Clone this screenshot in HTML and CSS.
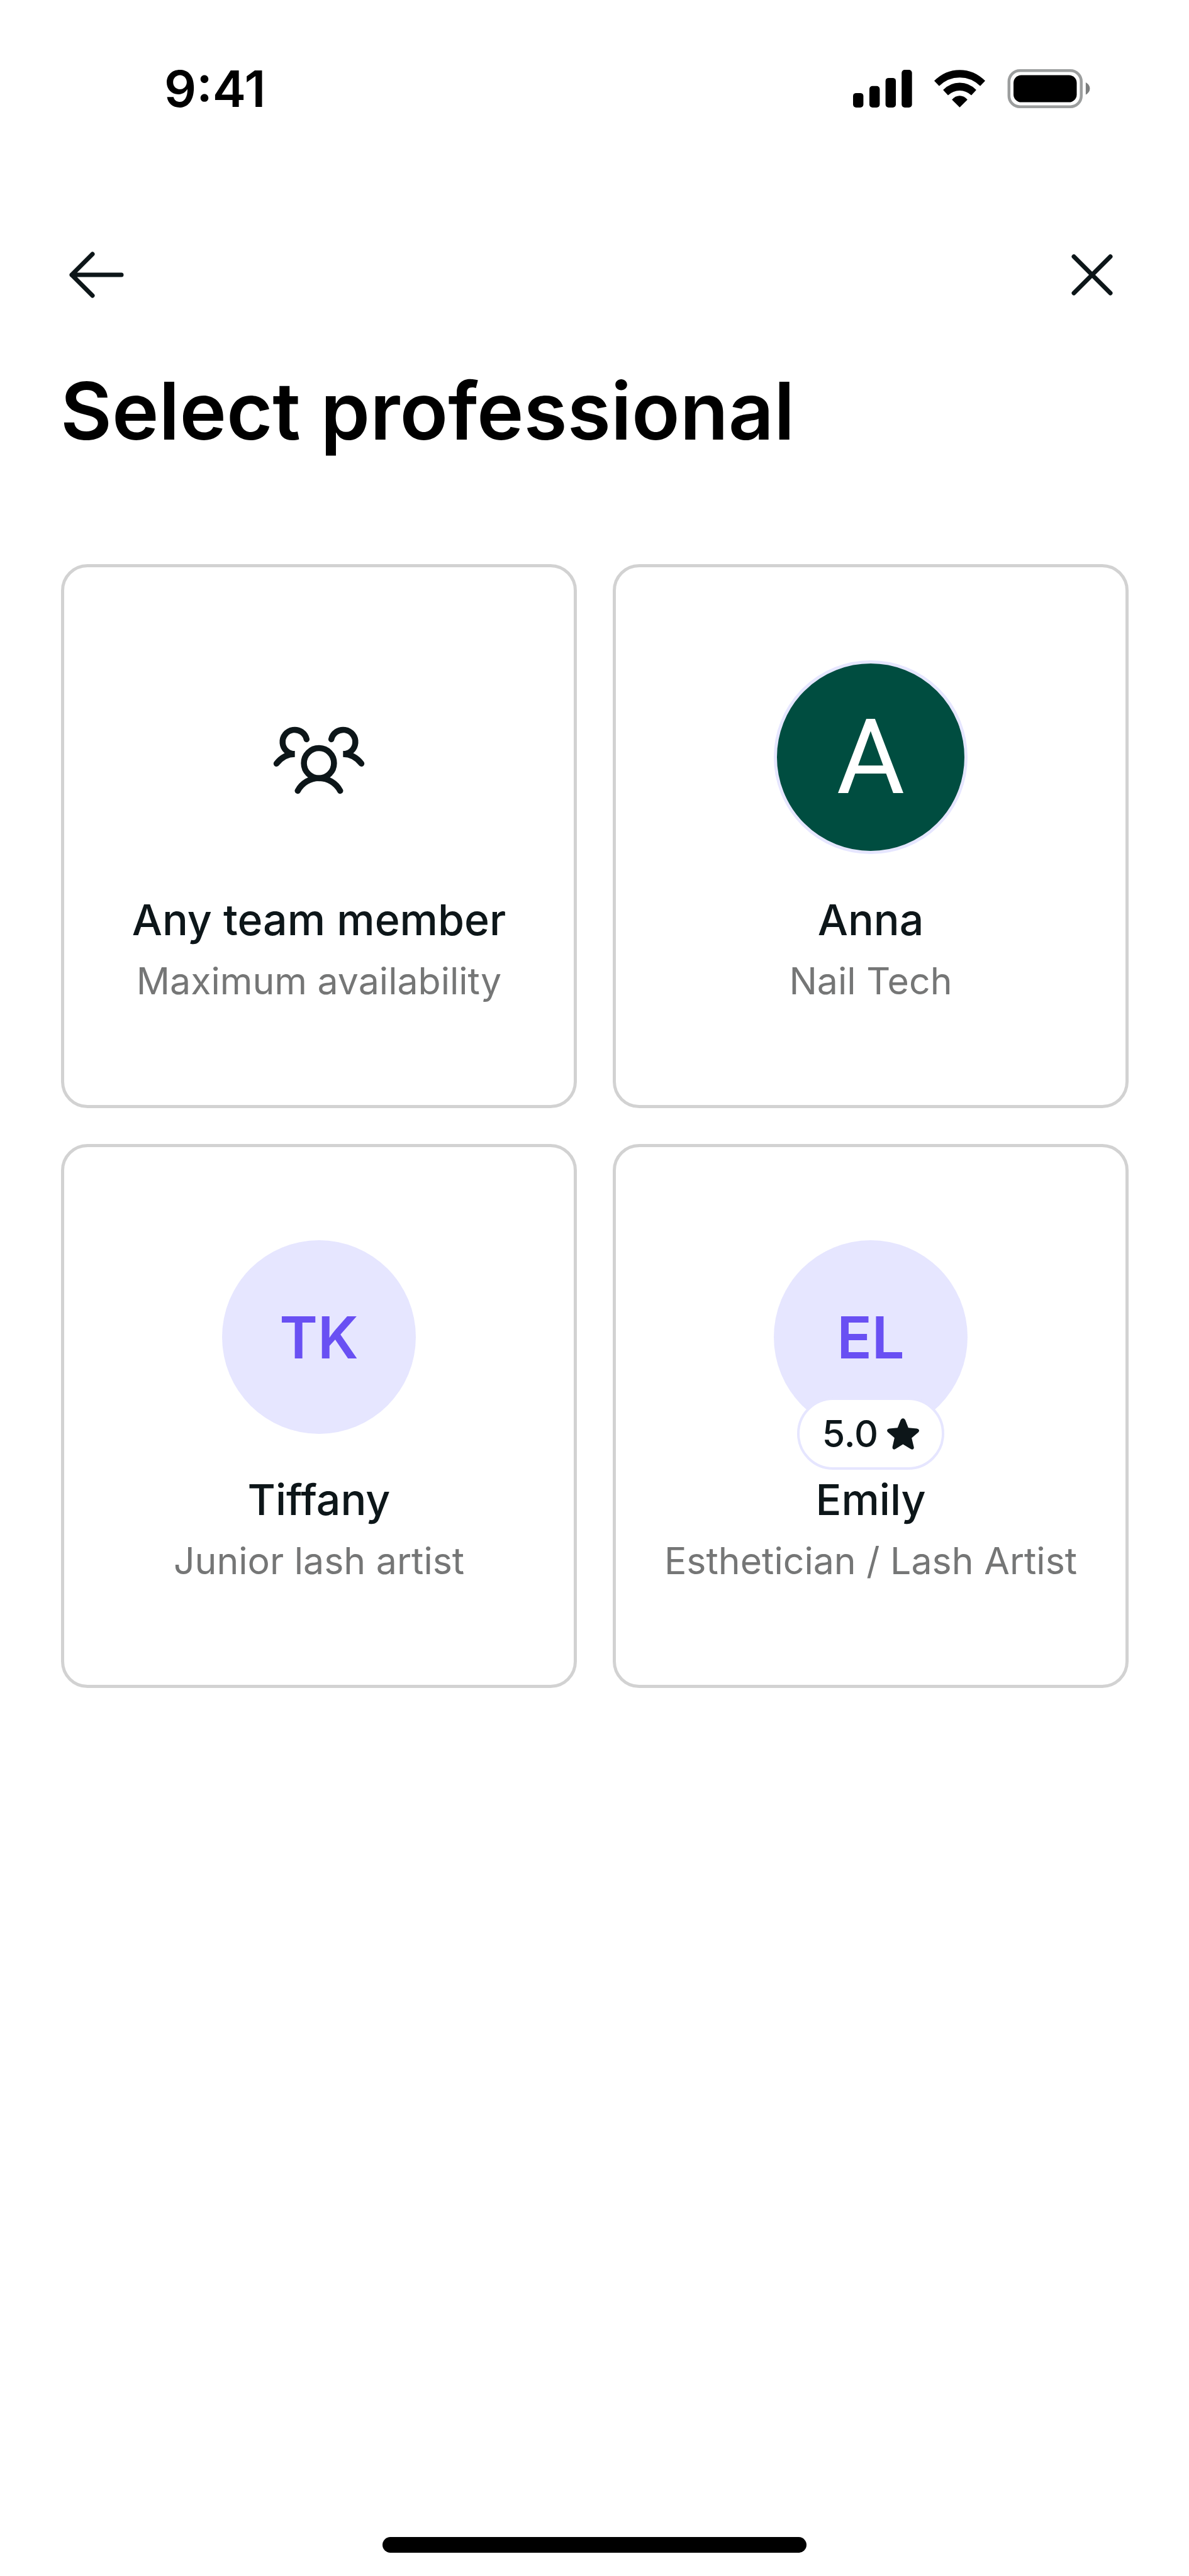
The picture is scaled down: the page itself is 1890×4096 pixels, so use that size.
FILE: index.html
```html
<!DOCTYPE html>
<html lang="en">
<head>
<meta charset="utf-8">
<meta name="viewport" content="width=device-width, initial-scale=1">
<title>Select professional</title>
<link rel="stylesheet" href="styles.css">
</head>
<body>
<div class="screen">
  <div class="status-bar">
    <time class="clock">9:41</time>
    <div class="status-icons">
      <svg class="signal" viewBox="82 66 286 182" aria-hidden="true">
        <rect x="82" y="178" width="50" height="70" rx="15"/>
        <rect x="161" y="144" width="50" height="104" rx="15"/>
        <rect x="239" y="105" width="50" height="143" rx="15"/>
        <rect x="317" y="66" width="50" height="182" rx="15"/>
      </svg>
      <svg class="wifi" viewBox="475 66 247 182" aria-hidden="true">
        <path d="M475 119Q528 66 598.500 66T722 119L698 144Q655 103 598.500 103T499 144Z"/>
        <path d="M518 163Q552 128 598.500 128T679 163L655 189Q630 166 598.500 166T542 189Z"/>
        <path d="M561 210Q577 191 598.500 191T636 210L598.500 248Z"/>
      </svg>
      <svg class="battery" viewBox="831 62 401 190" aria-hidden="true">
        <rect class="battery-shell" x="838" y="69" width="352" height="176" rx="53"/>
        <rect x="860" y="91" width="308" height="132" rx="38"/>
        <path class="battery-cap" d="M1212 126Q1232 137 1232 156T1212 186Z"/>
      </svg>
    </div>
  </div>

  <header class="header">
    <nav class="nav">
      <button class="icon-button" type="button" aria-label="Back">
        <svg viewBox="0 0 87 74" width="87" height="74" aria-hidden="true"><path d="M83 37H4M37 4L4 37L37 70"/></svg>
      </button>
      <button class="icon-button" type="button" aria-label="Close">
        <svg viewBox="0 0 66 66" width="66" height="66" aria-hidden="true"><path d="M4 4L62 62M62 4L4 62"/></svg>
      </button>
    </nav>
    <h1 class="title">Select professional</h1>
  </header>

  <main class="team">
    <button class="card" type="button">
      <span class="avatar avatar-any">
        <svg viewBox="112 16 464 464" width="152" height="152" aria-hidden="true">
          <circle cx="344" cy="277" r="73"/>
          <path d="M241 411A117 117 0 0 1 447 411"/>
          <path d="M284 161A59 59 0 1 0 227 233Q174 233 138 279"/>
          <path d="M404 161A59 59 0 1 1 461 233Q514 233 550 279"/>
        </svg>
      </span>
      <span class="name">Any team member</span>
      <span class="role">Maximum availability</span>
    </button>
    <button class="card" type="button">
      <span class="avatar avatar-photo">A</span>
      <span class="name">Anna</span>
      <span class="role">Nail Tech</span>
    </button>
    <button class="card" type="button">
      <span class="avatar">TK</span>
      <span class="name">Tiffany</span>
      <span class="role">Junior lash artist</span>
    </button>
    <button class="card" type="button">
      <span class="avatar">EL
        <span class="rating">5.0
          <svg class="star" viewBox="600 897 155 152" aria-hidden="true"><path d="M666 905Q677 890 688 905L703 943L744 947Q761 951 752 965L719 993L730 1038Q729 1051 716 1047L677 1023L639 1047Q626 1051 626 1037L636 992L603 964Q595 951 611 947L651 943Z"/></svg>
        </span>
      </span>
      <span class="name">Emily</span>
      <span class="role">Esthetician / Lash Artist</span>
    </button>
  </main>

  <div class="home-indicator"></div>
</div>
</body>
</html>
```
FILE: styles.css
```css
* {
  box-sizing: border-box;
}

body {
  margin: 0;
  background: #fff;
  color: #0d1619;
  font-family: Inter, "Liberation Sans", sans-serif;
}

button {
  margin: 0;
  padding: 0;
  border: 0;
  background: none;
  color: inherit;
  font: inherit;
  cursor: pointer;
}

svg {
  display: block;
}

.screen {
  display: flex;
  flex-direction: column;
  min-height: 100vh;
}

/* Status bar */
.status-bar {
  display: flex;
  align-items: center;
  justify-content: space-between;
  padding: 92px 157px 92px 261px;
  color: #000;
}

.clock {
  font-size: 80px;
  font-weight: 600;
  line-height: 97px;
}

.status-icons {
  display: flex;
  align-items: center;
  gap: 35px;
}

.signal {
  width: 94px;
  height: 60px;
}

.wifi {
  width: 81px;
  height: 60px;
}

.battery {
  width: 132px;
  height: 62px;
}

.battery-shell {
  fill: none;
  stroke: #9c9e9e;
  stroke-width: 14;
}

.battery-cap {
  fill: #7c7e7e;
}

/* Header */
.header {
  padding: 108px 96px 0 96px;
}

.nav {
  display: flex;
  align-items: center;
  justify-content: space-between;
  padding: 0 25px 0 14px;
}

.icon-button {
  display: flex;
  align-items: center;
  height: 96px;
}

.icon-button svg {
  fill: none;
  stroke: #0d1619;
  stroke-width: 7;
  stroke-linecap: round;
  stroke-linejoin: round;
}

.title {
  margin: 88px 0 0;
  color: #000;
  font-size: 126px;
  font-weight: 600;
  line-height: 160px;
}

/* Team grid */
.team {
  display: grid;
  grid-template-columns: repeat(2, minmax(0, 1fr));
  gap: 57px;
  padding: 164px 96px 57px 97px;
}

.card {
  display: flex;
  flex-direction: column;
  align-items: center;
  padding: 148px 0;
  border: 5px solid #d2d2d2;
  border-radius: 42px;
}

.avatar {
  position: relative;
  display: flex;
  align-items: center;
  justify-content: center;
  width: 308px;
  height: 308px;
  margin-bottom: 55px;
  border-radius: 50%;
  background: #e6e6ff;
  color: #6950f3;
  font-size: 92px;
  font-weight: 600;
}

.avatar-any {
  background: none;
}

.avatar-any svg {
  fill: none;
  stroke: #0d1619;
  stroke-width: 29;
  stroke-linecap: round;
}

.avatar-photo {
  border: 5px solid #e6e6ff;
  background: #004d40;
  color: #fff;
  font-family: Roboto, sans-serif;
  font-size: 166px;
  font-weight: 400;
}

.rating {
  position: absolute;
  bottom: -57px;
  display: flex;
  align-items: center;
  gap: 14px;
  padding: 0 36px;
  border: 4px solid #e6e6ff;
  border-radius: 58px;
  background: #fff;
  color: #0d1619;
  font-size: 59px;
  font-weight: 500;
  line-height: 107px;
}

.star {
  width: 51px;
  height: 50px;
  fill: #0d1619;
}

.name {
  font-size: 68px;
  font-weight: 500;
  line-height: 98px;
}

.role {
  color: #757676;
  font-size: 59px;
  font-weight: 400;
  line-height: 98px;
}

/* Home indicator */
.home-indicator {
  align-self: center;
  width: 674px;
  height: 25px;
  margin-top: auto;
  margin-bottom: 37px;
  border-radius: 13px;
  background: #000;
}
```
